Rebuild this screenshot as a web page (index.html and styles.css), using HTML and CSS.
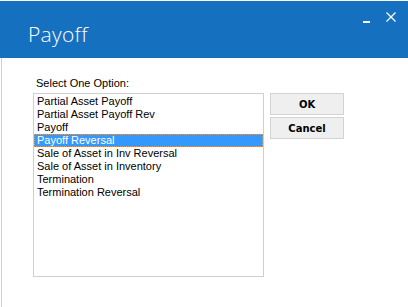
FILE: index.html
```html
<!doctype html>
<html lang="en">
  <head>
    <meta charset="UTF-8" />
    <title>Payoff</title>
    <link rel="stylesheet" href="styles.css">
  </head>
  <body>
    <div class="window">
      <div class="title-bar">
        <h1 class="title">Payoff</h1>
        <div class="controls">
          <svg class="btn-min" width="8" height="10" viewBox="0 0 8 10">
            <rect x="0" y="7" width="7" height="2" fill="#fff" />
          </svg>
          <svg class="btn-close" width="10" height="10" viewBox="0 0 10 10">
            <path d="M0.5 0.5 L9.5 9.5 M9.5 0.5 L0.5 9.5" stroke="#fff" stroke-width="1.3" fill="none" />
          </svg>
        </div>
      </div>

      <div class="content">
        <div class="pick">
          <div class="label">Select One Option:</div>
          <ul class="list">
            <li>Partial Asset Payoff</li>
            <li>Partial Asset Payoff Rev</li>
            <li>Payoff</li>
            <li class="selected">Payoff Reversal</li>
            <li>Sale of Asset in Inv Reversal</li>
            <li>Sale of Asset in Inventory</li>
            <li>Termination</li>
            <li>Termination Reversal</li>
          </ul>
        </div>
        <div class="actions">
          <button class="btn">OK</button>
          <button class="btn">Cancel</button>
        </div>
      </div>
    </div>
  </body>
</html>
```

FILE: styles.css
```css
:root {
  --title-bg: #1571bf;
  --border-left: #cdd1dc;
  --list-border: #cfcfcf;
  --select-bg: #3399ff;
  --btn-bg: #efefef;
  --btn-border: #d3d3d3;
}

* {
  margin: 0;
  padding: 0;
  box-sizing: border-box;
}

body {
  width: 408px;
  height: 307px;
  overflow: hidden;
  background: #ffffff;
  font-family: 'Liberation Sans', Arial, sans-serif;
  font-size: 11px;
  color: #000000;
}

.window {
  height: 100%;
  display: flex;
  flex-direction: column;
  padding-top: 1px;
}

.title-bar {
  height: 57px;
  background: var(--title-bg);
  display: flex;
  align-items: flex-start;
  padding-left: 28px;
}

.title {
  margin-top: 19px;
  font-family: 'Open Sans', sans-serif;
  font-weight: 300;
  font-size: 21px;
  line-height: 28px;
  color: #ffffff;
  letter-spacing: 0.3px;
}

.controls {
  margin-left: auto;
  display: flex;
  align-items: flex-start;
  gap: 15px;
  padding-top: 11px;
  padding-right: 12px;
}

.btn-min {
  margin-top: 2px;
}

.content {
  flex: 1;
  margin-left: 1px;
  border-left: 1px solid var(--border-left);
  display: flex;
  align-items: flex-start;
  gap: 6px;
  padding: 19px 0 0 31px;
}

.pick {
  display: flex;
  flex-direction: column;
}

.label {
  line-height: 13px;
  padding-left: 3px;
  margin-bottom: 3px;
}

.list {
  list-style: none;
  width: 231px;
  height: 184px;
  border: 1px solid var(--list-border);
  padding-top: 1px;
}

.list li {
  height: 13px;
  line-height: 13px;
  padding-left: 3px;
  white-space: nowrap;
}

.list li.selected {
  background: var(--select-bg);
  color: #ffffff;
  outline: 1px dotted #d99a5c;
  outline-offset: -1px;
}

.actions {
  margin-top: 16px;
  display: flex;
  flex-direction: column;
  gap: 2px;
}

.btn {
  width: 74px;
  height: 22px;
  background: var(--btn-bg);
  border: 1px solid var(--btn-border);
  font-family: 'DejaVu Sans', sans-serif;
  font-weight: bold;
  font-size: 10px;
  color: #000000;
}
```
